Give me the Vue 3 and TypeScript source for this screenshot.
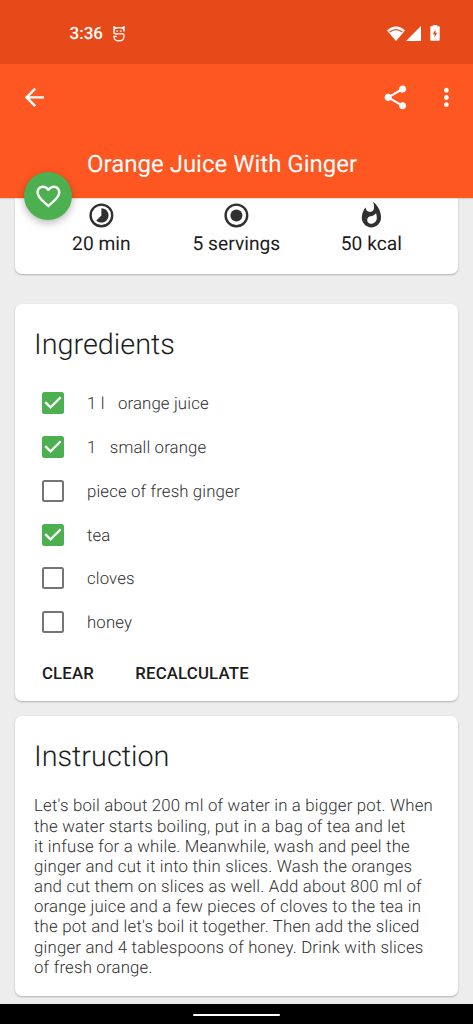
<script setup lang="ts">
import { ref } from 'vue'

interface Ingredient {
  amount: string
  name: string
  checked: boolean
}

const ingredients = ref<Ingredient[]>([
  { amount: '1 l', name: 'orange juice', checked: true },
  { amount: '1', name: 'small orange', checked: true },
  { amount: '', name: 'piece of fresh ginger', checked: false },
  { amount: '', name: 'tea', checked: true },
  { amount: '', name: 'cloves', checked: false },
  { amount: '', name: 'honey', checked: false },
])

const steps: string[] = [
  "Let's boil about 200 ml of water in a bigger pot. When",
  'the water starts boiling, put in a bag of tea and let',
  'it infuse for a while. Meanwhile, wash and peel the',
  'ginger and cut it into thin slices. Wash the oranges',
  'and cut them on slices as well. Add about 800 ml of',
  'orange juice and a few pieces of cloves to the tea in',
  "the pot and let's boil it together. Then add the sliced",
  'ginger and 4 tablespoons of honey. Drink with slices',
  'of fresh orange.',
]

function clearAll(): void {
  ingredients.value.forEach((item) => (item.checked = false))
}
</script>

<template>
  <div class="screen">
    <div class="status">
      <span class="clock">3:36</span>
      <svg class="mascot" viewBox="0 0 12 16" fill="none" stroke="#fff" stroke-width="1.3">
        <path d="M11 5.4V4.4Q10.4 1.7 6 1.7T1 4.6V6.6Q1 7.9 2.2 7.9H9.8Q11 7.9 11 9V10Q11 14.9 6 14.9T1 10.4H4" />
        <path d="M1 4.6V.9L3.3 2.1M11 4.6V.9L8.7 2.1" />
        <path d="M3.4 5.1H4.9M7.1 5.1H8.6" />
      </svg>
      <span class="grow"></span>
      <svg class="wifi" viewBox="0 0 18 15">
        <path fill="#fff" d="M9 15L0 4.5Q4 .4 9 .4T18 4.5Z" />
        <path fill="none" stroke="#e64a19" stroke-width="1.4" d="M2.6 6Q9 1.3 15.4 6" />
      </svg>
      <svg class="signal" viewBox="0 0 15 15"><path fill="#fff" d="M0 15L15 0V15Z" /></svg>
      <svg class="battery" viewBox="0 0 10 16">
        <path fill="#fff" d="M2.8 1.3V0H7.2V1.3H9Q9.7 1.3 9.7 2V15Q9.7 15.8 9 15.8H1Q.3 15.8 .3 15V2Q.3 1.3 1 1.3Z" />
        <path fill="#e64a19" d="M5.5 4.6V7.8H7.2L4.5 12.4V9.2H2.8Z" />
      </svg>
    </div>

    <header class="appbar">
      <div class="tools">
        <svg class="icon" viewBox="0 0 24 24"><path d="M20 11H7.83l5.59-5.59L12 4l-8 8 8 8 1.41-1.41L7.83 13H20v-2z" /></svg>
        <span class="grow"></span>
        <svg class="icon share" viewBox="0 0 24 24"><path d="M18 16.08c-.76 0-1.44.3-1.96.77L8.91 12.7c.05-.23.09-.46.09-.7s-.04-.47-.09-.7l7.05-4.11c.54.5 1.25.81 2.04.81 1.66 0 3-1.34 3-3s-1.34-3-3-3-3 1.34-3 3c0 .24.04.47.09.7L8.04 9.81C7.5 9.31 6.79 9 6 9c-1.66 0-3 1.34-3 3s1.34 3 3 3c.79 0 1.5-.31 2.04-.81l7.12 4.16c-.05.21-.08.43-.08.65 0 1.61 1.31 2.92 2.92 2.92 1.61 0 2.92-1.31 2.92-2.92s-1.31-2.92-2.92-2.92z" /></svg>
        <svg class="icon" viewBox="0 0 24 24"><path d="M12 8c1.1 0 2-.9 2-2s-.9-2-2-2-2 .9-2 2 .9 2 2 2zm0 2c-1.1 0-2 .9-2 2s.9 2 2 2 2-.9 2-2-.9-2-2-2zm0 6c-1.1 0-2 .9-2 2s.9 2 2 2 2-.9 2-2-.9-2-2-2z" /></svg>
      </div>
      <h1>Orange Juice With Ginger</h1>
      <button class="fab" aria-label="Favourite">
        <svg class="icon" viewBox="0 0 24 24"><path d="M16.5 3c-1.74 0-3.41.81-4.5 2.09C10.91 3.81 9.24 3 7.5 3 4.42 3 2 5.42 2 8.5c0 3.78 3.4 6.86 8.55 11.54L12 21.35l1.45-1.32C18.6 15.36 22 12.28 22 8.5 22 5.42 19.58 3 16.5 3zm-4.4 15.55l-.1.1-.1-.1C7.14 14.24 4 11.39 4 8.5 4 6.5 5.5 5 7.5 5c1.54 0 3.04.99 3.57 2.36h1.87C13.46 5.99 14.96 5 16.5 5c2 0 3.5 1.5 3.5 3.5 0 2.89-3.14 5.74-7.9 10.05z" /></svg>
      </button>
    </header>

    <main class="content">
      <section class="card facts">
        <div class="fact">
          <svg class="icon dark" viewBox="0 0 24 24">
            <circle cx="12" cy="12" r="9" fill="none" stroke="#303030" stroke-width="2" />
            <path d="M16.24 7.76C15.07 6.59 13.54 6 12 6v6l-4.24 4.24c2.34 2.34 6.14 2.34 8.49 0 2.34-2.34 2.34-6.14-.01-8.48z" />
          </svg>
          <span>20 min</span>
        </div>
        <div class="fact">
          <svg class="icon dark" viewBox="0 0 24 24">
            <circle cx="12" cy="12" r="9" fill="none" stroke="#303030" stroke-width="2" />
            <circle cx="12" cy="12" r="5" />
          </svg>
          <span>5 servings</span>
        </div>
        <div class="fact">
          <svg class="icon dark" viewBox="0 0 24 24"><path d="M13.5.67s.74 2.65.74 4.8c0 2.06-1.35 3.73-3.41 3.73-2.07 0-3.63-1.67-3.63-3.73l.03-.36C5.21 7.51 4 10.62 4 14c0 4.42 3.58 8 8 8s8-3.58 8-8C20 8.61 17.41 3.8 13.5.67zM11.71 19c-1.78 0-3.22-1.4-3.22-3.14 0-1.62 1.05-2.76 2.81-3.12 1.77-.36 3.6-1.21 4.62-2.58.39 1.29.59 2.65.59 4.04 0 2.65-2.15 4.8-4.8 4.8z" /></svg>
          <span>50 kcal</span>
        </div>
      </section>

      <section class="card ingredients">
        <h2>Ingredients</h2>
        <ul>
          <li v-for="item in ingredients" :key="item.name" @click="item.checked = !item.checked">
            <span class="box" :class="{ on: item.checked }">
              <svg v-if="item.checked" viewBox="3 3 18 18"><path d="M10 17l-5-5 1.41-1.41L10 14.17l7.59-7.59L19 8l-9 9z" /></svg>
            </span>
            <span v-if="item.amount" class="label amount">{{ item.amount }}</span>
            <span class="label">{{ item.name }}</span>
          </li>
        </ul>
        <div class="actions">
          <button @click="clearAll">CLEAR</button>
          <button>RECALCULATE</button>
        </div>
      </section>

      <section class="card instruction">
        <h2>Instruction</h2>
        <p><span v-for="line in steps" :key="line" class="line">{{ line }}</span></p>
      </section>
    </main>

    <footer class="nav"><span></span></footer>
  </div>
</template>

<style>
body {
  margin: 0;
  background: #ededed;
}
</style>

<style scoped>
* {
  box-sizing: border-box;
}
.screen {
  width: 473px;
  height: 1024px;
  overflow: hidden;
  display: flex;
  flex-direction: column;
  background: #ededed;
  font-family: Roboto, "Liberation Sans", sans-serif;
  text-rendering: geometricPrecision;
  color: #1c1c1c;
}
.grow {
  flex: 1;
}
.status {
  height: 64px;
  flex: none;
  background: #e64a19;
  display: flex;
  align-items: center;
  padding: 3px 33.5px 0 69.5px;
  color: #fff;
}
.clock {
  font-size: 17px;
  font-weight: 500;
  width: 43.2px;
  white-space: nowrap;
}
.mascot {
  width: 12px;
  height: 16px;
}
.wifi {
  width: 18px;
  height: 15px;
  margin-right: 1.5px;
}
.signal {
  width: 15px;
  height: 15px;
  margin-right: 8.5px;
}
.battery {
  width: 10px;
  height: 16px;
  margin-top: -1px;
}
.appbar {
  position: relative;
  z-index: 1;
  height: 134px;
  flex: none;
  background: #ff5722;
  color: #fff;
  box-shadow: 0 1px 1px rgba(0, 0, 0, 0.12);
}
.tools {
  height: 67px;
  display: flex;
  align-items: center;
  padding: 0 12.5px 0 19.8px;
}
.icon {
  width: 28.8px;
  height: 28.8px;
  fill: #fff;
  display: block;
  flex: none;
}
.share {
  margin-right: 21.8px;
}
h1 {
  margin: 17px 0 0 87px;
  font-size: 24px;
  line-height: 32px;
  font-weight: 400;
  white-space: nowrap;
}
.fab {
  position: absolute;
  left: 24.3px;
  top: 108px;
  width: 48px;
  height: 48px;
  border: 0;
  border-radius: 50%;
  padding: 0;
  background: #4caf50;
  display: grid;
  place-items: center;
  box-shadow: 0 3px 8px rgba(0, 0, 0, 0.28);
}
.content {
  flex: 1;
  min-height: 0;
  padding: 0 14.8px 0 14.6px;
}
.card {
  background: #fff;
  border-radius: 7px;
  box-shadow: 0 1px 2px rgba(0, 0, 0, 0.26);
}
.facts {
  height: 76px;
  border-radius: 0 0 7px 7px;
  display: grid;
  grid-template-columns: repeat(3, 135px);
  justify-content: center;
  padding-top: 2.8px;
}
.fact {
  display: flex;
  flex-direction: column;
  align-items: center;
  font-size: 19.2px;
  line-height: 24px;
  letter-spacing: 0.03px;
  white-space: nowrap;
}
.fact span {
  margin-top: 2px;
}
.dark {
  fill: #303030;
}
.ingredients {
  margin-top: 30.3px;
  height: 396.7px;
}
h2 {
  margin: 0;
  padding: 22.7px 0 0 19.4px;
  font-size: 28.8px;
  line-height: 36px;
  font-weight: 300;
}
ul {
  list-style: none;
  margin: 0;
  padding: 18.4px 0 0 27.4px;
}
li {
  height: 43.75px;
  display: flex;
  align-items: center;
  font-size: 16.8px;
  font-weight: 300;
  letter-spacing: 0.14px;
  color: #303030;
  white-space: nowrap;
}
.label {
  padding-top: 2.4px;
}
.box {
  width: 22px;
  height: 22px;
  margin-right: 23px;
  border: 2px solid #757575;
  border-radius: 2.5px;
}
.box.on {
  border: 0;
  background: #4caf50;
}
.box svg {
  display: block;
  width: 22px;
  height: 22px;
  fill: #fff;
}
.amount {
  margin-right: 13.3px;
}
.actions {
  display: flex;
  gap: 41.2px;
  padding: 16.7px 0 0 27.4px;
}
.actions button {
  border: 0;
  padding: 0;
  background: none;
  font: 500 16.8px/24px Roboto, "Liberation Sans", sans-serif;
  letter-spacing: 0.18px;
  color: #1c1c1c;
}
.instruction {
  margin-top: 15px;
  height: 280px;
}
p {
  margin: 0;
  padding: 21.8px 0 0 19.4px;
  font-size: 16.8px;
  line-height: 20.15px;
  font-weight: 300;
  letter-spacing: 0.195px;
  color: #303030;
}
.line {
  display: block;
  white-space: nowrap;
}
.nav {
  height: 20px;
  flex: none;
  background: #000;
  display: flex;
  justify-content: center;
  align-items: center;
  padding-top: 1.5px;
}
.nav span {
  width: 87px;
  height: 2.5px;
  border-radius: 2px;
  background: #fff;
}
</style>
